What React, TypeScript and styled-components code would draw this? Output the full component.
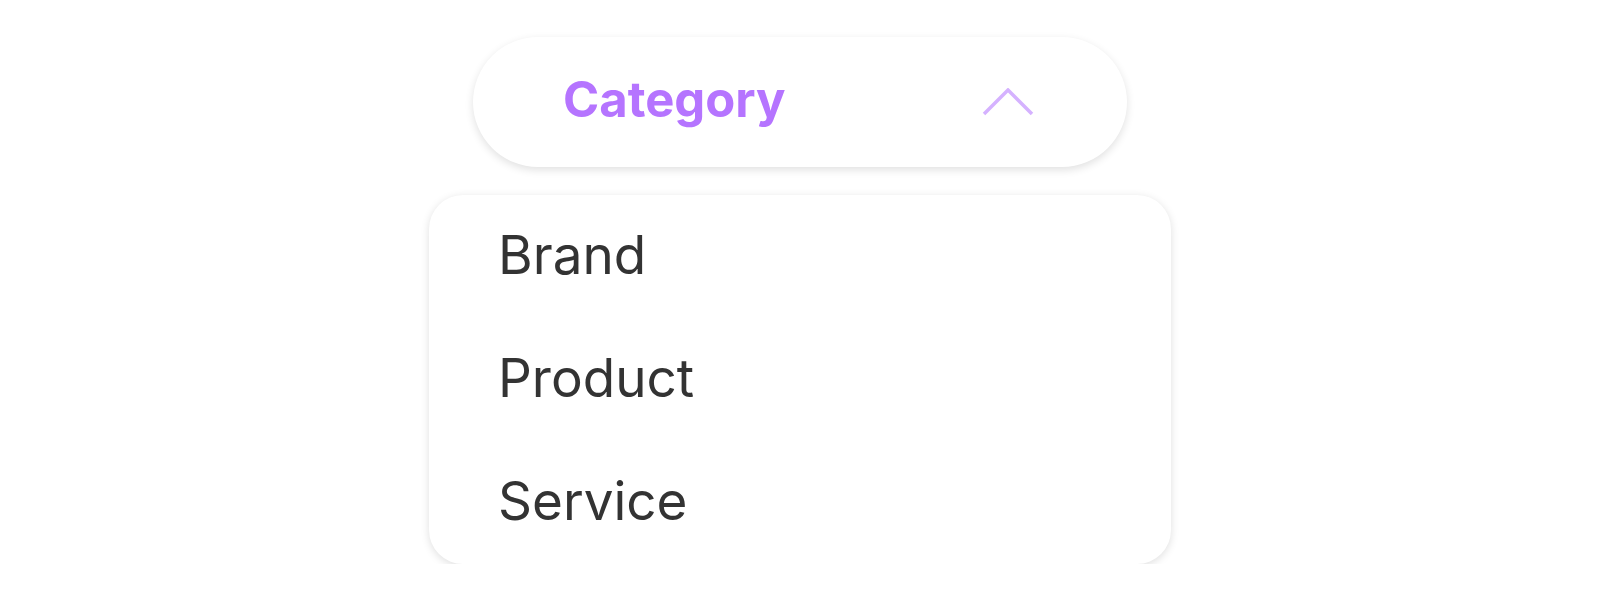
import React, {useState} from "react";
import styled, {createGlobalStyle} from 'styled-components'

const GlobalStyle = createGlobalStyle`
  body {
    margin: 0;
    background: #ffffff;
    font-family: Inter, "Noto Sans", sans-serif;
  }
`

const Page = styled.div`
  display: flex;
  flex-direction: column;
  align-items: center;
  padding-top: 37px;
  gap: 28px;
`

const Trigger = styled.button`
  width: 654px;
  height: 130px;
  box-sizing: border-box;
  padding: 0 93px 0 90px;
  display: flex;
  align-items: center;
  justify-content: space-between;
  background: #ffffff;
  border: none;
  border-radius: 65px;
  box-shadow: 0 3px 8px rgba(0, 0, 0, 0.12);
  cursor: pointer;
  font-family: Inter, sans-serif;
`

const Label = styled.span`
  font-size: 49px;
  font-weight: 700;
  color: #b574ff;
  padding-bottom: 6px;
`

const Menu = styled.ul`
  width: 742px;
  margin: 0;
  padding: 0;
  list-style: none;
  background: #ffffff;
  border-radius: 34px;
  box-shadow: 0 2px 8px rgba(0, 0, 0, 0.13);
`

const Item = styled.li`
  height: 123px;
  line-height: 121px;
  padding-left: 69px;
  font-size: 53px;
  font-weight: 400;
  color: #333333;
  cursor: pointer;
`

const Chevron: React.FC<{open: boolean}> = ({open}) => (
    <svg width="52" height="28" viewBox="0 0 52 28"
         style={{transform: open ? 'none' : 'rotate(180deg)'}}>
        <polyline points="2,26 26,2 50,26" fill="none" stroke="#d5b2ff" strokeWidth="3.5"/>
    </svg>
)

const options = ["Brand", "Product", "Service"]

const App: React.FC = () => {
    const [open, setOpen] = useState(true)

    return (
        <Page>
            <GlobalStyle/>
            <Trigger onClick={() => setOpen(!open)}>
                <Label>Category</Label>
                <Chevron open={open}/>
            </Trigger>
            {open && (
                <Menu>
                    {options.map(o => <Item key={o}>{o}</Item>)}
                </Menu>
            )}
        </Page>
    )
}

export default App
